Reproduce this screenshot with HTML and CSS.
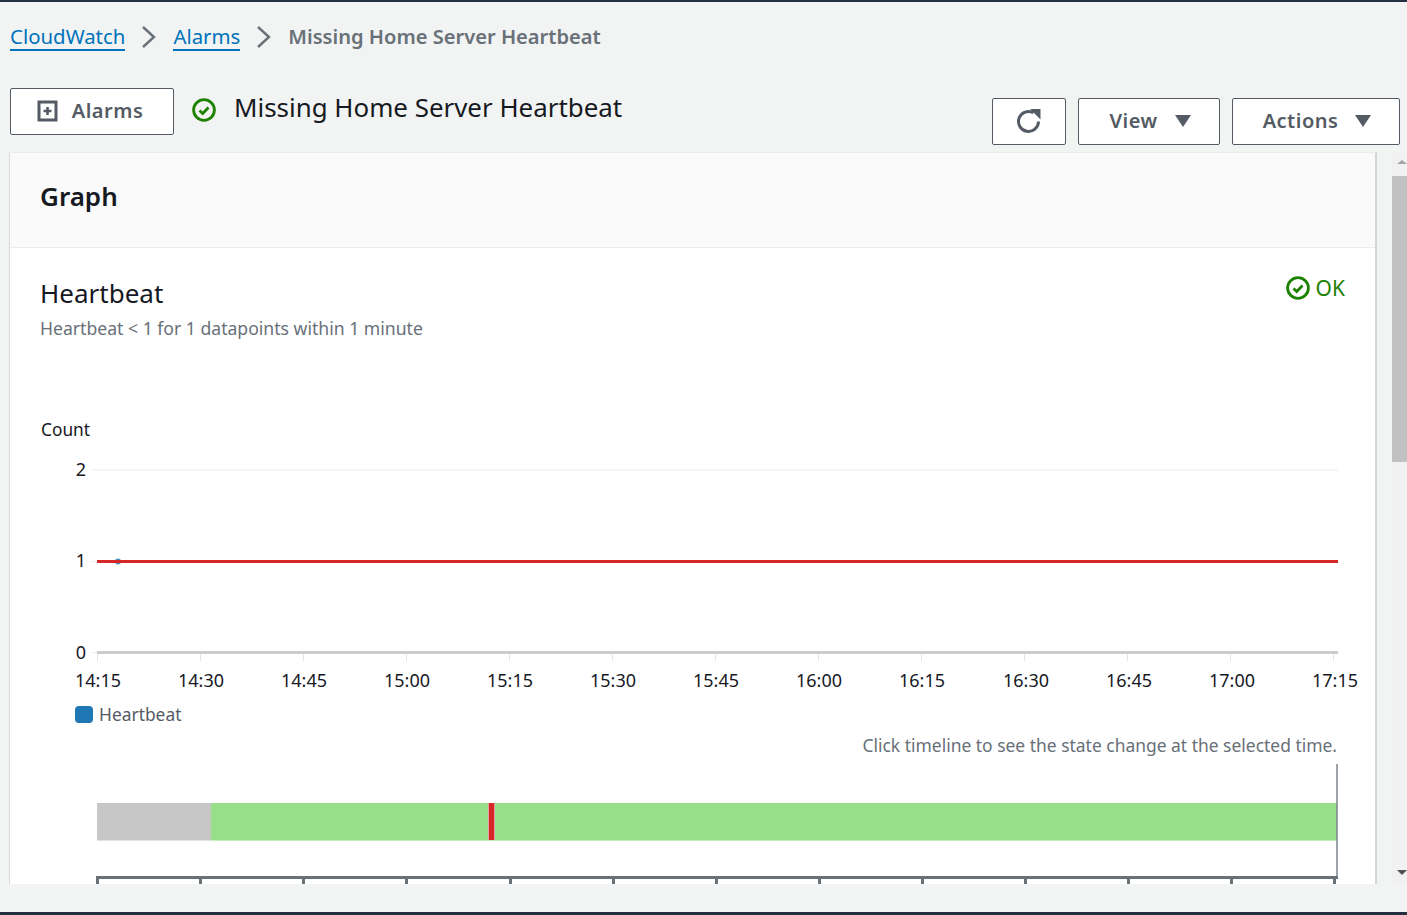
FILE: index.html
```html
<!DOCTYPE html>
<html lang="en">
<head>
  <meta charset="UTF-8" />
  <title>Missing Home Server Heartbeat</title>
  <link rel="stylesheet" href="styles.css">
</head>
<body>

<nav class="crumbs">
  <a href="#">CloudWatch</a>
  <svg class="crumb-sep" width="16" height="24" viewBox="0 0 16 24"><path d="M2 2l11 10L2 22" fill="none" stroke="#687078" stroke-width="2.4"/></svg>
  <a href="#">Alarms</a>
  <svg class="crumb-sep" width="16" height="24" viewBox="0 0 16 24"><path d="M2 2l11 10L2 22" fill="none" stroke="#687078" stroke-width="2.4"/></svg>
  <span class="crumb-current">Missing Home Server Heartbeat</span>
</nav>

<header class="page-head">
  <div class="head-left">
    <button class="btn btn-alarms">
      <svg width="22" height="22" viewBox="0 0 22 22"><rect x="2" y="2" width="17" height="18" fill="none" stroke="#545b64" stroke-width="3"/><path d="M10.5 7v8M6.5 11h8" stroke="#545b64" stroke-width="2.6"/></svg>
      Alarms
    </button>
    <svg class="status-icon" width="24" height="24" viewBox="0 0 24 24"><circle cx="12" cy="12" r="10.4" fill="none" stroke="#1d8102" stroke-width="2.8"/><path d="M7.5 12.5l3.2 3 5.8-6" fill="none" stroke="#1d8102" stroke-width="2.8"/></svg>
    <h1>Missing Home Server Heartbeat</h1>
  </div>
  <div class="head-right">
    <button class="btn btn-refresh">
      <svg width="26" height="26" viewBox="0 0 26 26"><path d="M22.5 13.5A10 10 0 1 1 17.5 4.8" fill="none" stroke="#545b64" stroke-width="3"/><path d="M14 1h10.5v10.5z" fill="#545b64"/></svg>
    </button>
    <button class="btn btn-view">View <i class="caret"></i></button>
    <button class="btn btn-actions">Actions <i class="caret"></i></button>
  </div>
</header>

<div class="main-row">
  <section class="panel">
    <div class="panel-head"><h2>Graph</h2></div>
    <div class="panel-body">
      <div class="alarm-title">
        <div>
          <h3>Heartbeat</h3>
          <p>Heartbeat &lt; 1 for 1 datapoints within 1 minute</p>
        </div>
        <div class="ok">
          <svg width="24" height="24" viewBox="0 0 24 24"><circle cx="12" cy="12" r="10.4" fill="none" stroke="#1d8102" stroke-width="2.8"/><path d="M7.5 12.5l3.2 3 5.8-6" fill="none" stroke="#1d8102" stroke-width="2.8"/></svg>
          OK
        </div>
      </div>
      <svg class="chart" width="1366" height="474" viewBox="10 410 1366 474">
        <text class="count" x="41" y="436">Count</text>

        <line x1="91" y1="470" x2="1338" y2="470" stroke="#e9ebed"/>
        <line x1="91" y1="561.5" x2="97" y2="561.5" stroke="#e9ebed"/>
        <line x1="91" y1="652.5" x2="97" y2="652.5" stroke="#e9ebed"/>
        <text class="lbl" x="86" y="476" text-anchor="end">2</text>
        <text class="lbl" x="86" y="567" text-anchor="end">1</text>
        <text class="lbl" x="86" y="659" text-anchor="end">0</text>

        <line x1="97" y1="652.5" x2="1338" y2="652.5" stroke="#cccccc" stroke-width="3"/>
        <g stroke="#e3e5e7">
          <line x1="97.5" y1="654" x2="97.5" y2="661"/>
          <line x1="200.5" y1="654" x2="200.5" y2="661"/>
          <line x1="303.5" y1="654" x2="303.5" y2="661"/>
          <line x1="406.5" y1="654" x2="406.5" y2="661"/>
          <line x1="509.5" y1="654" x2="509.5" y2="661"/>
          <line x1="612.5" y1="654" x2="612.5" y2="661"/>
          <line x1="715.5" y1="654" x2="715.5" y2="661"/>
          <line x1="818.5" y1="654" x2="818.5" y2="661"/>
          <line x1="921.5" y1="654" x2="921.5" y2="661"/>
          <line x1="1024.5" y1="654" x2="1024.5" y2="661"/>
          <line x1="1127.5" y1="654" x2="1127.5" y2="661"/>
          <line x1="1230.5" y1="654" x2="1230.5" y2="661"/>
          <line x1="1333.5" y1="654" x2="1333.5" y2="661"/>
        </g>
        <g text-anchor="middle" class="lbl">
          <text x="98" y="687">14:15</text>
          <text x="201" y="687">14:30</text>
          <text x="304" y="687">14:45</text>
          <text x="407" y="687">15:00</text>
          <text x="510" y="687">15:15</text>
          <text x="613" y="687">15:30</text>
          <text x="716" y="687">15:45</text>
          <text x="819" y="687">16:00</text>
          <text x="922" y="687">16:15</text>
          <text x="1026" y="687">16:30</text>
          <text x="1129" y="687">16:45</text>
          <text x="1232" y="687">17:00</text>
          <text x="1335" y="687">17:15</text>
        </g>

        <circle cx="118" cy="561.5" r="3" fill="#1f77b4" opacity="0.8"/>
        <line x1="97" y1="561.5" x2="1338" y2="561.5" stroke="#d62728" stroke-width="3"/>

        <rect x="75" y="706" width="18" height="17" rx="4" fill="#1f77b4"/>
        <text class="legend" x="99" y="721">Heartbeat</text>

        <text class="hint" x="1337" y="752" text-anchor="end">Click timeline to see the state change at the selected time.</text>

        <rect x="97" y="803" width="114" height="37" fill="#c7c7c7"/>
        <rect x="211" y="803" width="1126" height="37" fill="#98df8a"/>
        <rect x="488" y="803" width="7" height="38" fill="#e8a0a0"/>
        <rect x="489" y="803" width="5" height="38" fill="#d62728"/>
        <line x1="97" y1="840.5" x2="211" y2="840.5" stroke="#e3e3e3"/>
        <line x1="211" y1="840.5" x2="1337" y2="840.5" stroke="#c5edbd"/>
        <line x1="1337" y1="764" x2="1337" y2="878" stroke="#7d858c" stroke-width="1.5"/>

        <g fill="#687078">
          <rect x="96" y="876" width="1242" height="3"/>
          <rect x="96" y="876" width="3" height="8"/>
          <rect x="199" y="876" width="3" height="8"/>
          <rect x="302" y="876" width="3" height="8"/>
          <rect x="405" y="876" width="3" height="8"/>
          <rect x="509" y="876" width="3" height="8"/>
          <rect x="612" y="876" width="3" height="8"/>
          <rect x="715" y="876" width="3" height="8"/>
          <rect x="818" y="876" width="3" height="8"/>
          <rect x="921" y="876" width="3" height="8"/>
          <rect x="1024" y="876" width="3" height="8"/>
          <rect x="1127" y="876" width="3" height="8"/>
          <rect x="1230" y="876" width="3" height="8"/>
          <rect x="1333" y="876" width="3" height="8"/>
        </g>
      </svg>
    </div>
  </section>

  <div class="scrollbar">
    <svg class="scroll-arrow" width="15" height="24" viewBox="0 0 15 24"><path d="M5 12l5-4 5 4z" fill="#a3a3a3"/></svg>
    <div class="scroll-thumb"></div>
    <svg class="scroll-arrow scroll-down" width="15" height="12" viewBox="0 0 15 12"><path d="M5 4h10l-5 5z" fill="#505050"/></svg>
  </div>
</div>

<div class="page-foot"></div>

</body>
</html>
```

FILE: styles.css
```css
html, body {
  margin: 0;
  height: 915px;
  overflow: hidden;
}
body {
  background-color: #f2f3f3;
  font-family: "Noto Sans", sans-serif;
  color: #16191f;
  border-top: 2px solid #232f3e;
  box-sizing: border-box;
  display: flex;
  flex-direction: column;
}
h1, h2, h3, p {
  margin: 0;
  font-weight: 400;
}

.crumbs {
  height: 70px;
  flex: none;
  padding: 20px 0 0 10px;
  box-sizing: border-box;
  display: flex;
  align-items: flex-start;
  font-size: 20.4px;
  line-height: 30px;
}
.crumbs a {
  color: #0073bb;
  text-decoration: none;
  border-bottom: 2px solid #0073bb;
  height: 27px;
  line-height: 29px;
}
.crumb-sep {
  margin: 3px 16px 0 16px;
}
.crumb-current {
  color: #687078;
  font-size: 20.1px;
  font-weight: 600;
}

.page-head {
  height: 80px;
  flex: none;
  padding: 16px 7px 0 10px;
  box-sizing: border-box;
  display: flex;
  justify-content: space-between;
}
.head-left {
  display: flex;
  align-items: flex-start;
  height: 47px;
}
.head-left h1 {
  font-size: 25.9px;
  line-height: 38px;
  margin-left: 18px;
}
.status-icon {
  margin: 10px 0 0 18px;
}
.head-right {
  display: flex;
  gap: 12px;
  margin-top: 10px;
  height: 47px;
}
.btn {
  height: 47px;
  box-sizing: border-box;
  background: #ffffff;
  border: 1px solid #545b64;
  border-radius: 2px;
  color: #545b64;
  font-family: inherit;
  font-weight: 600;
  font-size: 20px;
  line-height: 24px;
  padding: 0 0 1px;
  letter-spacing: 0.5px;
  display: flex;
  align-items: center;
  justify-content: center;
}
.btn-alarms {
  width: 164px;
  gap: 13px;
  padding-right: 4px;
}
.btn-refresh {
  width: 74px;
  padding: 0 0 2px;
}
.btn-view {
  width: 142px;
  gap: 17px;
  padding-left: 2px;
}
.btn-actions {
  width: 168px;
  gap: 17px;
  padding-left: 2px;
}
.caret {
  width: 0;
  height: 0;
  border-left: 8px solid transparent;
  border-right: 8px solid transparent;
  border-top: 12px solid #545b64;
}

.main-row {
  height: 732px;
  flex: none;
  display: flex;
}
.panel {
  width: 1368px;
  margin-left: 9px;
  box-sizing: border-box;
  background: #ffffff;
  border-left: 1px solid #d5dbdb;
  border-right: 2px solid #d5d5d5;
  border-top: 1px solid #eaeded;
  overflow: hidden;
}
.panel-head {
  height: 95px;
  box-sizing: border-box;
  background: #fafafa;
  border-bottom: 1px solid #eaeded;
  padding: 0 30px 8px;
  display: flex;
  align-items: center;
}
.panel-head h2 {
  font-size: 26px;
  font-weight: 600;
}
.panel-body {
  height: 636px;
  overflow: hidden;
}
.alarm-title {
  height: 162px;
  padding: 25px 30px 0 30px;
  box-sizing: border-box;
  display: flex;
  justify-content: space-between;
}
.alarm-title h3 {
  font-size: 26px;
  line-height: 41px;
}
.alarm-title p {
  font-size: 17.6px;
  line-height: 28px;
  color: #687078;
}
.ok {
  display: flex;
  align-items: center;
  gap: 6px;
  height: 28px;
  margin-top: 1px;
  color: #1d8102;
  font-size: 21px;
}
.chart {
  display: block;
}
.lbl, .lbl text {
  font-family: "Noto Sans", sans-serif;
  font-size: 18px;
  fill: #16191f;
}
.count {
  font-family: "Noto Sans", sans-serif;
  font-size: 17.3px;
  fill: #16191f;
}
.legend {
  font-family: "Noto Sans", sans-serif;
  font-size: 17.4px;
  fill: #545b64;
}
.hint {
  font-family: "Noto Sans", sans-serif;
  font-size: 17.45px;
  fill: #687078;
}

.scrollbar {
  width: 15px;
  margin-left: 15px;
  background: #f1f1f1;
  display: flex;
  flex-direction: column;
}
.scroll-arrow {
  display: block;
  flex: none;
}
.scroll-thumb {
  height: 286px;
  background: #c1c1c1;
}
.scroll-down {
  margin-top: auto;
  margin-bottom: 6px;
}

.page-foot {
  flex: 1;
  border-bottom: 3px solid #232f3e;
}
```
